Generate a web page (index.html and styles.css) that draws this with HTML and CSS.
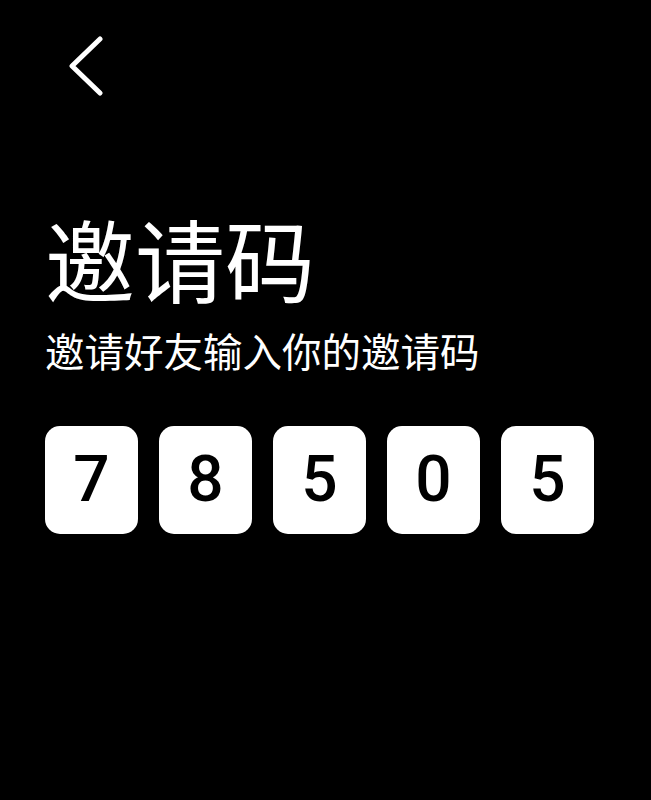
FILE: index.html
```html
<!DOCTYPE html>
<html lang="zh-CN">
<head>
<meta charset="utf-8">
<title>邀请码</title>
<link rel="stylesheet" href="styles.css">
</head>
<body>
<div class="page">
  <div class="header">
    <svg class="back" width="40" height="64" viewBox="0 0 40 64" aria-label="返回">
      <polyline points="31,5 3,32 31,59" fill="none" stroke="#fff" stroke-width="5" stroke-linecap="round" stroke-linejoin="round"/>
    </svg>
  </div>
  <h1 class="title">邀请码</h1>
  <p class="subtitle">邀请好友输入你的邀请码</p>
  <div class="code">
    <div class="digit">7</div>
    <div class="digit">8</div>
    <div class="digit">5</div>
    <div class="digit">0</div>
    <div class="digit">5</div>
  </div>
</div>
</body>
</html>
```
FILE: styles.css
```css
html, body {
  margin: 0;
  padding: 0;
  background: #000;
}
.page {
  width: 651px;
  height: 800px;
  box-sizing: border-box;
  padding: 34px 0 0 45px;
  display: flex;
  flex-direction: column;
  color: #fff;
  font-family: "Noto Sans CJK SC", "Noto Sans", sans-serif;
}
.header {
  height: 64px;
  display: flex;
  align-items: center;
  padding-left: 24px;
}
.back {
  display: block;
}
.title {
  margin: 114px 0 0 0;
  font-size: 90px;
  font-weight: 400;
  line-height: 1;
}
.subtitle {
  margin: 28px 0 0 0;
  font-size: 39.5px;
  line-height: 1;
}
.code {
  margin-top: 56px;
  display: flex;
  gap: 21px;
}
.digit {
  width: 93px;
  height: 108px;
  background: #fff;
  border-radius: 15px;
  color: #000;
  font-family: Roboto, "Liberation Sans", sans-serif;
  font-weight: 500;
  font-size: 64px;
  display: flex;
  align-items: center;
  justify-content: center;
}
```
